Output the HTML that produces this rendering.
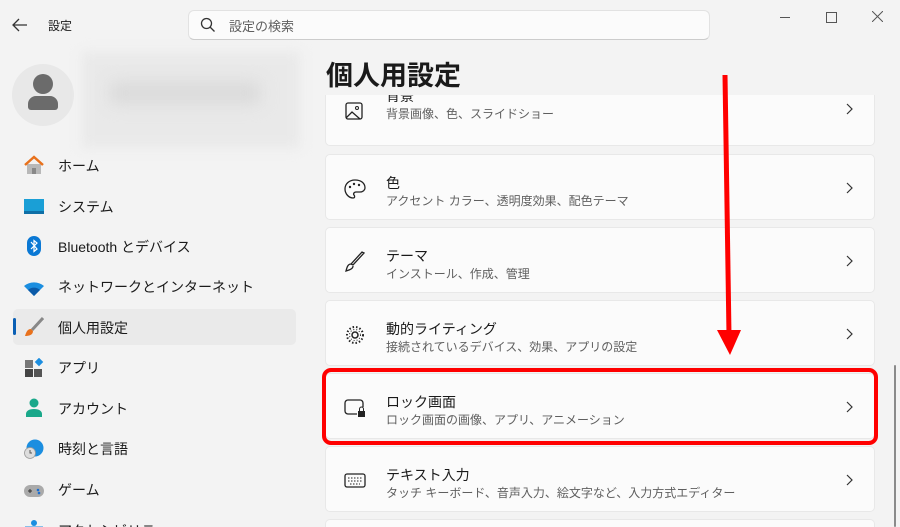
<!DOCTYPE html>
<html style="overflow:hidden;height:527px"><head><meta charset="utf-8"><style>
html,body{overflow:hidden;height:527px}
body{margin:0;width:900px;background:#f3f3f3;font-family:"Liberation Sans","Noto Sans CJK JP",sans-serif;position:relative;color:#1a1a1a}
.a{position:absolute}
.nav{position:absolute;left:58px;font-size:14px;line-height:20px}
.ic{position:absolute;left:24px;width:20px;height:20px}
.card{position:absolute;left:325px;width:550px;height:66px;background:#fbfbfb;border:1px solid #e8e8e8;border-radius:5px;box-sizing:border-box}
.card .t{position:absolute;left:60px;top:19px;font-size:14px;line-height:18px}
.card .s{position:absolute;left:60px;top:38px;font-size:12px;color:#5f5f5f;line-height:16px}
.card .ch{position:absolute;right:20px;top:27px}
.card svg.i{position:absolute;left:18px;top:23px}
</style></head><body>
<svg class="a" style="left:12px;top:18px" width="16" height="14"><path d="M15 7H2M7 1 1 7l6 6" stroke="#333" stroke-width="1.3" fill="none"/></svg>
<div class="a" style="left:48px;top:17px;font-size:12px">設定</div>
<div class="a" style="left:188px;top:10px;width:522px;height:30px;background:#fbfbfb;border:1px solid #e2e2e2;border-bottom-color:#ccc;border-radius:6px;box-sizing:border-box"></div>
<svg class="a" style="left:200px;top:17px" width="16" height="16"><circle cx="6.5" cy="6.5" r="5" stroke="#333" stroke-width="1.3" fill="none"/><path d="M10 10l4.5 4.5" stroke="#333" stroke-width="1.3"/></svg>
<div class="a" style="left:229px;top:16px;font-size:13px;color:#5f5f5f">設定の検索</div>
<div class="a" style="left:780px;top:17px;width:10px;height:1px;background:#555"></div>
<div class="a" style="left:826px;top:12px;width:9px;height:9px;border:1px solid #555"></div>
<svg class="a" style="left:872px;top:11px" width="11" height="11"><path d="M0 0l11 11M11 0 0 11" stroke="#555"/></svg>
<div class="a" style="left:12px;top:64px;width:62px;height:62px;border-radius:50%;background:#e8e8e8"></div>
<div class="a" style="left:33px;top:74px;width:20px;height:20px;border-radius:50%;background:#6b6b6b"></div>
<div class="a" style="left:28px;top:96px;width:30px;height:14px;border-radius:8px 8px 3px 3px;background:#6b6b6b"></div>
<div class="a" style="left:82px;top:52px;width:218px;height:96px;background:#e9e9e9;filter:blur(6px)"></div>
<div class="a" style="left:110px;top:82px;width:150px;height:22px;background:#dadada;filter:blur(8px)"></div>

<svg class="ic" style="top:155px" viewBox="0 0 20 20"><path d="M3 9v10h14V9" fill="#b8b8b8"/><path d="M1 10 10 2l9 8" stroke="#e8711c" stroke-width="2.5" fill="none"/><rect x="8" y="13" width="4" height="6" fill="#888"/></svg>
<div class="nav" style="top:156px">ホーム</div>
<svg class="ic" style="top:197px" viewBox="0 0 20 20"><rect x="0" y="2" width="20" height="15" fill="#1a9fd6"/><rect x="0" y="14" width="20" height="3" fill="#0f6fa6"/></svg>
<div class="nav" style="top:197px">システム</div>
<svg class="ic" style="top:236px" viewBox="0 0 20 20"><rect x="3" y="0" width="14" height="20" rx="7" fill="#0a78d4"/><path d="M7 6l6 7-3 2.5V4.5L13 7 7 13" stroke="#fff" stroke-width="1.2" fill="none"/></svg>
<div class="nav" style="top:237px">Bluetooth とデバイス</div>
<svg class="ic" style="top:278px" viewBox="0 0 20 20"><path d="M0 8a14 12 0 0 1 20 0L10 18Z" fill="#1b8ee0"/><path d="M4 12a8 7 0 0 1 12 0L10 18Z" fill="#0b5aa8"/></svg>
<div class="nav" style="top:277px">ネットワークとインターネット</div>
<div class="a" style="left:13px;top:309px;width:283px;height:36px;background:#eaeaea;border-radius:5px"></div>
<div class="a" style="left:13px;top:318px;width:3px;height:17px;background:#0a5fb4;border-radius:2px"></div>
<svg class="ic" style="top:317px" viewBox="0 0 20 20"><path d="M19 1 8 13" stroke="#888" stroke-width="3"/><path d="M7 12c-4 0-5 4-6 7 4 0 8-1 8-5z" fill="#e8711c"/></svg>
<div class="nav" style="top:318px">個人用設定</div>
<svg class="ic" style="top:358px" viewBox="0 0 20 20"><rect x="1" y="2" width="8" height="8" fill="#777"/><rect x="1" y="11" width="8" height="8" fill="#444"/><rect x="10" y="11" width="8" height="8" fill="#555"/><rect x="12" y="1" width="6" height="6" fill="#1b8ee0" transform="rotate(45 15 4)"/></svg>
<div class="nav" style="top:358px">アプリ</div>
<svg class="ic" style="top:398px" viewBox="0 0 20 20"><circle cx="10" cy="5" r="4.5" fill="#1aa88a"/><path d="M2 19v-3c0-3 3-5 8-5s8 2 8 5v3z" fill="#1aa88a"/></svg>
<div class="nav" style="top:399px">アカウント</div>
<svg class="ic" style="top:439px" viewBox="0 0 20 20"><circle cx="11" cy="9" r="8.5" fill="#1b8ee0"/><circle cx="6" cy="14" r="5.5" fill="#ddd" stroke="#999" stroke-width=".8"/><path d="M6 11v3h2" stroke="#555" fill="none"/></svg>
<div class="nav" style="top:439px">時刻と言語</div>
<svg class="ic" style="top:481px" viewBox="0 0 20 20"><rect x="0" y="4" width="20" height="12" rx="6" fill="#aaa"/><path d="M4 10h4M6 8v4" stroke="#333"/><circle cx="14" cy="9" r="1.3" fill="#1b6ed0"/><circle cx="15" cy="12" r="1.3" fill="#1b6ed0"/></svg>
<div class="nav" style="top:480px">ゲーム</div>
<svg class="ic" style="top:520px" viewBox="0 0 20 20"><circle cx="10" cy="3" r="3" fill="#1b8ee0"/><path d="M1 8h18" stroke="#1b8ee0" stroke-width="3"/></svg>
<div class="nav" style="top:521px">アクセシビリティ</div>

<div class="a" style="left:326px;top:57px;font-size:27px;font-weight:bold;line-height:38px">個人用設定</div>

<div class="a" style="left:322px;top:94px;width:556px;height:433px;overflow:hidden">
<div class="card" style="left:3px;top:-14px"><svg class="i" width="20" height="20" style="top:20px"><rect x="2" y="2" width="16" height="16" rx="2" stroke="#222" stroke-width="1.3" fill="none"/><path d="M2 17l6-6 8 7" stroke="#222" stroke-width="1.3" fill="none"/><circle cx="13" cy="7" r="1.5" stroke="#222" fill="none"/></svg><div class="t" style="top:6px">背景</div><div class="s" style="top:25px">背景画像、色、スライドショー</div><svg class="ch" style="top:22px" width="8" height="12"><path d="M1 1l5 5-5 5" stroke="#333" stroke-width="1.2" fill="none"/></svg></div>
</div>
<div class="a" style="left:322px;top:90px;width:556px;height:5px;background:#f3f3f3"></div>

<div class="card" style="top:154px"><svg class="i" width="22" height="22"><path d="M11 2C5 2 1 6 1 11s4 9 8 9c2 0 2-2 1-3s0-3 2-3h4c3 0 5-2 5-4 0-5-4-8-10-8z" stroke="#222" stroke-width="1.3" fill="none"/><circle cx="6" cy="9" r="1.2" fill="#222"/><circle cx="10" cy="6" r="1.2" fill="#222"/><circle cx="15" cy="7" r="1.2" fill="#222"/></svg><div class="t">色</div><div class="s">アクセント カラー、透明度効果、配色テーマ</div><svg class="ch" width="8" height="12"><path d="M1 1l5 5-5 5" stroke="#333" stroke-width="1.2" fill="none"/></svg></div>
<div class="card" style="top:227px"><svg class="i" width="22" height="22"><path d="M20 2 9 14l-2-1L18 1zM7 13c-3 0-4 3-5 7 3-1 7-2 7-5" stroke="#222" stroke-width="1.3" fill="none"/></svg><div class="t">テーマ</div><div class="s">インストール、作成、管理</div><svg class="ch" width="8" height="12"><path d="M1 1l5 5-5 5" stroke="#333" stroke-width="1.2" fill="none"/></svg></div>
<div class="card" style="top:300px"><svg class="i" width="22" height="22"><circle cx="11" cy="11" r="3" stroke="#222" stroke-width="1.5" fill="none"/><circle cx="11" cy="11" r="8" stroke="#222" stroke-width="2" stroke-dasharray="1.5 2" fill="none"/><circle cx="11" cy="11" r="5.5" stroke="#222" stroke-width="1" stroke-dasharray="1 2" fill="none"/></svg><div class="t">動的ライティング</div><div class="s">接続されているデバイス、効果、アプリの設定</div><svg class="ch" width="8" height="12"><path d="M1 1l5 5-5 5" stroke="#333" stroke-width="1.2" fill="none"/></svg></div>
<div class="card" style="top:373px"><svg class="i" width="22" height="22"><path d="M13 17H4a3 3 0 0 1-3-3V6a3 3 0 0 1 3-3h12a3 3 0 0 1 3 3v4" stroke="#222" stroke-width="1.3" fill="none"/><rect x="14" y="14" width="7" height="6" fill="#222"/><path d="M15.5 14v-2a2 2 0 0 1 4 0v2" stroke="#222" fill="none"/></svg><div class="t">ロック画面</div><div class="s">ロック画面の画像、アプリ、アニメーション</div><svg class="ch" width="8" height="12"><path d="M1 1l5 5-5 5" stroke="#333" stroke-width="1.2" fill="none"/></svg></div>
<div class="card" style="top:446px"><svg class="i" width="22" height="22"><rect x="1" y="4" width="20" height="13" rx="2" stroke="#222" stroke-width="1.3" fill="none"/><path d="M4 8h14M4 11h14M6 14h10" stroke="#222" stroke-dasharray="1.5 1.5"/></svg><div class="t">テキスト入力</div><div class="s">タッチ キーボード、音声入力、絵文字など、入力方式エディター</div><svg class="ch" width="8" height="12"><path d="M1 1l5 5-5 5" stroke="#333" stroke-width="1.2" fill="none"/></svg></div>
<div class="card" style="top:519px;height:8px;border-bottom:none;border-radius:5px 5px 0 0"></div>

<div class="a" style="left:322px;top:368px;width:556px;height:77px;border:4px solid #f00;border-radius:9px;box-sizing:border-box"></div>
<div class="a" style="left:894px;top:365px;width:2px;height:162px;background:#8a8a8a;border-radius:1px"></div>
<svg class="a" style="left:0;top:0" width="900" height="527"><path d="M725 75 729 335" stroke="#f00" stroke-width="5"/><path d="M717 330 741 330 730 355Z" fill="#f00"/></svg>
</body></html>
